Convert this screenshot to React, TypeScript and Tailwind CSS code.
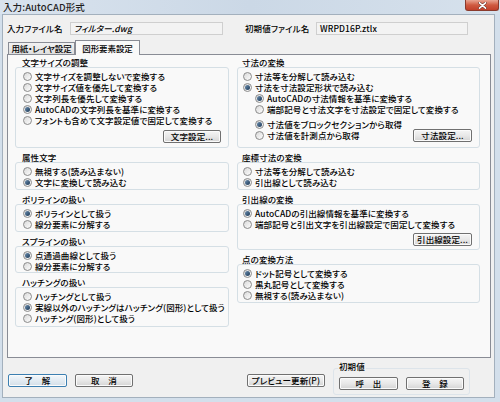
import React from "react";

const font = "font-['Noto_Sans_CJK_JP','Liberation_Sans',sans-serif] font-medium [font-feature-settings:'palt'] tracking-[0.1px]";

const Radio = ({
  checked = false,
  label,
  className = "",
}: {
  checked?: boolean;
  label: string;
  className?: string;
}) => (
  <div className={`flex h-[11px] items-center ${className}`}>
    <span className="flex h-[9px] w-[9px] shrink-0 items-center justify-center rounded-full border border-[#8b8b8b] bg-linear-to-br from-[#d9d9d9] to-[#fdfdfd]">
      {checked && (
        <span className="h-[5px] w-[5px] rounded-full bg-linear-to-br from-[#6d8fb0] to-[#1d3a58]" />
      )}
    </span>
    <span className="ml-[3px] whitespace-nowrap leading-[11px]">{label}</span>
  </div>
);

const Btn = ({
  children,
  className = "",
  primary = false,
}: {
  children: React.ReactNode;
  className?: string;
  primary?: boolean;
}) => (
  <div
    className={`flex h-[13px] shrink-0 items-center justify-center whitespace-nowrap rounded-[2px] border leading-[11px] shadow-[inset_0_0_0_1px_#fbfbfb] ${
      primary
        ? "border-[#3c7fb1] bg-linear-to-b from-[#f3f8fc] to-[#d3dee8]"
        : "border-[#707070] bg-linear-to-b from-[#f5f5f5] via-[#e8e8e8] to-[#d4d4d4]"
    } ${className}`}
  >
    {children}
  </div>
);

const Group = ({
  title,
  box,
  pad,
  children,
}: {
  title: string;
  box: string;
  pad: string;
  children: React.ReactNode;
}) => (
  <div>
    <div className={`h-[9px] whitespace-nowrap leading-[9px] ${pad}`}>{title}</div>
    <div className={`rounded-[3px] border border-[#d5dfe5] pt-[3px] ${box}`}>{children}</div>
  </div>
);

const TitleBar = () => (
  <div className="relative flex h-[14px] shrink-0 items-center bg-linear-to-r from-[#d9e3ee] via-[#cbd8e6] to-[#d6e1ec] pl-[3px] text-[9.5px] text-[#1e1e1e]">
    <span className="leading-[11px]">入力:AutoCAD形式</span>
    <div className="absolute right-[1px] top-0 flex h-[11px] w-[34px] items-center justify-center rounded-b-[3px] border border-t-0 border-[#8a3a2c] bg-linear-to-b from-[#e9a592] via-[#cf5a40] to-[#c2402a]">
      <svg width="9" height="7" viewBox="0 0 9 7">
        <path d="M1.5 0.8 L7.5 6.2 M7.5 0.8 L1.5 6.2" stroke="#5a2a20" strokeWidth="2.6" strokeLinecap="round" />
        <path d="M1.5 0.8 L7.5 6.2 M7.5 0.8 L1.5 6.2" stroke="#ffffff" strokeWidth="1.6" strokeLinecap="round" />
      </svg>
    </div>
  </div>
);

export default function App() {
  return (
    <div className={`flex h-[402px] w-[500px] flex-col overflow-hidden bg-[#d3dfeb] text-[8.5px] text-[#000] ${font}`}>
      <TitleBar />
      <div className="ml-[2px] mr-[5px] flex h-[384px] flex-col border border-[#a3b0bd] bg-[#f0f0f0] pl-[4px]">
        {/* file names */}
        <div className="mt-[7px] flex h-[13px] items-center">
          <span className="w-[63px] whitespace-nowrap">入力ファイル名</span>
          <div className="flex h-[13px] w-[153px] items-center border border-[#cfcfcf] bg-[#f3f3f3] pl-[3px] italic">
            フィルター.dwg
          </div>
          <span className="ml-[22px] w-[71px] whitespace-nowrap">初期値ファイル名</span>
          <div className="flex h-[13px] w-[152px] items-center border border-[#cfcfcf] bg-[#f3f3f3] pl-[3px]">
            WRPD16P.ztlx
          </div>
        </div>

        {/* tabs */}
        <div className="mt-[5px] flex h-[14px] items-end pl-[1px] tracking-[-0.1px]">
          <div className="flex h-[12px] w-[67px] items-center justify-center whitespace-nowrap border border-b-0 border-[#898c95] bg-linear-to-b from-[#f2f2f2] to-[#dedede]">
            用紙・レイヤ設定
          </div>
          <div className="relative z-10 -mb-[1px] flex h-[15px] w-[65px] items-center justify-center whitespace-nowrap border border-b-0 border-[#898c95] bg-[#f9f9f9]">
            図形要素設定
          </div>
        </div>

        {/* panel */}
        <div className="flex h-[304px] w-[484px] gap-[8px] border border-[#898c95] bg-[#f9f9f9] pl-[7px] pt-[3px]">
          <div className="flex w-[214px] flex-col gap-[5px]">
            <Group title="文字サイズの調整" box="h-[81px] pl-[7px]" pad="pl-[7px]">
              <Radio label="文字サイズを調整しないで変換する" />
              <Radio label="文字サイズ値を優先して変換する" />
              <Radio label="文字列長を優先して変換する" />
              <Radio checked label="AutoCADの文字列長を基準に変換する" />
              <Radio label="フォントも含めて文字設定値で固定して変換する" />
              <div className="mt-[4px] flex justify-end pr-[7px]">
                <Btn className="w-[58px]">文字設定...</Btn>
              </div>
            </Group>
            <Group title="属性文字" box="h-[28px] pl-[7px]" pad="pl-[7px]">
              <Radio label="無視する(読み込まない)" />
              <Radio checked label="文字に変換して読み込む" />
            </Group>
            <Group title="ポリラインの扱い" box="h-[28px] pl-[7px]" pad="pl-[7px]">
              <Radio checked label="ポリラインとして扱う" />
              <Radio label="線分要素に分解する" />
            </Group>
            <Group title="スプラインの扱い" box="h-[27px] pl-[7px]" pad="pl-[7px]">
              <Radio checked label="点通過曲線として扱う" />
              <Radio label="線分要素に分解する" />
            </Group>
            <Group title="ハッチングの扱い" box="h-[40px] pl-[7px]" pad="pl-[7px]">
              <Radio label="ハッチングとして扱う" />
              <Radio checked label="実線以外のハッチングはハッチング(図形)として扱う" />
              <Radio label="ハッチング(図形)として扱う" />
            </Group>
          </div>

          <div className="flex w-[243px] flex-col gap-[5px]">
            <Group title="寸法の変換" box="h-[81px] pl-[5px]" pad="pl-[5px]">
              <Radio label="寸法等を分解して読み込む" />
              <Radio checked label="寸法を寸法設定形状で読み込む" />
              <Radio checked className="ml-[12px]" label="AutoCADの寸法情報を基準に変換する" />
              <Radio className="ml-[12px]" label="端部記号と寸法文字を寸法設定で固定して変換する" />
              <div className="mt-[4px] flex items-end justify-between pr-[7px]">
                <div className="ml-[12px]">
                  <Radio checked label="寸法値をブロックセクションから取得" />
                  <Radio label="寸法値を計測点から取得" />
                </div>
                <Btn className="-mb-[1px] w-[59px]">寸法設定...</Btn>
              </div>
            </Group>
            <Group title="座標寸法の変換" box="h-[28px] pl-[5px]" pad="pl-[5px]">
              <Radio label="寸法等を分解して読み込む" />
              <Radio checked label="引出線として読み込む" />
            </Group>
            <Group title="引出線の変換" box="h-[46px] pl-[5px]" pad="pl-[5px]">
              <Radio checked label="AutoCADの引出線情報を基準に変換する" />
              <Radio label="端部記号と引出文字を引出線設定で固定して変換する" />
              <div className="mt-[3px] flex justify-end pr-[7px]">
                <Btn className="w-[59px]">引出線設定...</Btn>
              </div>
            </Group>
            <Group title="点の変換方法" box="h-[39px] pl-[5px]" pad="pl-[5px]">
              <Radio checked label="ドット記号として変換する" />
              <Radio label="黒丸記号として変換する" />
              <Radio label="無視する(読み込まない)" />
            </Group>
          </div>
        </div>

        {/* bottom buttons */}
        <div className="flex flex-1 items-end pb-[2px]">
          <Btn primary className="mb-[8px] ml-[1px] w-[59px]">了　解</Btn>
          <Btn className="mb-[8px] ml-[8px] w-[58px]">取　消</Btn>
          <Btn className="mb-[8px] ml-[114px] w-[78px]">プレビュー更新(P)</Btn>
          <div className="relative ml-[8px] flex h-[27px] w-[137px] items-center gap-[8px] rounded-[3px] border border-[#dde4ea] pl-[5px]">
            <span className="absolute -top-[8px] left-[4px] bg-[#f0f0f0] px-[1px] leading-[10px]">初期値</span>
            <Btn className="mt-[4px] w-[59px]">呼　出</Btn>
            <Btn className="mt-[4px] w-[58px]">登　録</Btn>
          </div>
        </div>
      </div>
    </div>
  );
}
